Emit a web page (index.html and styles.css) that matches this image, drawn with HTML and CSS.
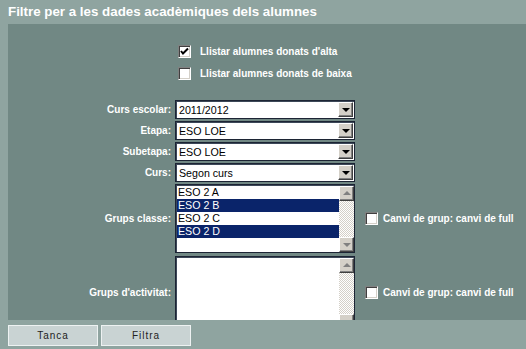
FILE: index.html
```html
<!DOCTYPE html>
<html lang="ca">
<head>
  <meta charset="UTF-8" />
  <title>Filtre per a les dades acadèmiques dels alumnes</title>
  <link rel="stylesheet" href="styles.css">
</head>
<body>
  <h1 class="title">Filtre per a les dades acadèmiques dels alumnes</h1>

  <div class="panel">
    <div class="checks">
      <label class="check-row">
        <span class="check">
          <svg width="9" height="9" viewBox="0 0 9 9"><path d="M1 4 L3 6.5 L8 1.5" fill="none" stroke="#000" stroke-width="2"/></svg>
        </span>
        Llistar alumnes donats d'alta
      </label>
      <label class="check-row">
        <span class="check"></span>
        Llistar alumnes donats de baixa
      </label>
    </div>

    <div class="filter-grid">
      <span class="label">Curs escolar:</span>
      <div class="combo"><span>2011/2012</span><i class="combo-btn"></i></div>
      <span></span>

      <span class="label">Etapa:</span>
      <div class="combo"><span>ESO LOE</span><i class="combo-btn"></i></div>
      <span></span>

      <span class="label">Subetapa:</span>
      <div class="combo"><span>ESO LOE</span><i class="combo-btn"></i></div>
      <span></span>

      <span class="label">Curs:</span>
      <div class="combo"><span>Segon curs</span><i class="combo-btn"></i></div>
      <span></span>

      <span class="label">Grups classe:</span>
      <div class="listbox">
        <ul class="options">
          <li>ESO 2 A</li>
          <li class="selected">ESO 2 B</li>
          <li>ESO 2 C</li>
          <li class="selected">ESO 2 D</li>
        </ul>
        <div class="scrollbar">
          <i class="arrow up"></i>
          <i class="track"></i>
          <i class="arrow down"></i>
        </div>
      </div>
      <label class="check-row side">
        <span class="check"></span>
        Canvi de grup: canvi de full
      </label>

      <span class="label">Grups d'activitat:</span>
      <div class="listbox tall">
        <ul class="options"></ul>
        <div class="scrollbar">
          <i class="arrow up"></i>
          <i class="track"></i>
          <i class="arrow down"></i>
        </div>
      </div>
      <label class="check-row side">
        <span class="check"></span>
        Canvi de grup: canvi de full
      </label>
    </div>
  </div>

  <div class="actions">
    <button class="btn">Tanca</button>
    <button class="btn">Filtra</button>
  </div>
</body>
</html>
```

FILE: styles.css
```css
body {
  margin: 0;
  background: #8fa4a0;
  font-family: 'Liberation Sans', Arial, sans-serif;
  color: #fff;
  height: 349px;
  overflow: hidden;
}
.title {
  margin: 0;
  padding: 0 8px;
  height: 24px;
  line-height: 24px;
  font-size: 13.33px;
  font-weight: bold;
  color: #fff;
}
.panel {
  margin-left: 8px;
  height: 296px;
  background: #718884;
  overflow: hidden;
}
.checks {
  padding: 21px 0 0 170px;
  display: flex;
  flex-direction: column;
  gap: 9px;
  height: 55px;
}
.check-row {
  display: flex;
  align-items: center;
  gap: 9px;
  font-size: 10px;
  font-weight: bold;
  color: #fff;
  height: 13px;
}
.check {
  width: 13px;
  height: 13px;
  box-sizing: border-box;
  background: #fff;
  border-top: 1px solid #808080;
  border-left: 1px solid #808080;
  border-right: 1px solid #fff;
  border-bottom: 1px solid #fff;
  box-shadow: inset 1px 1px 0 #404040, inset -1px -1px 0 #d4d0c8;
  display: flex;
  align-items: center;
  justify-content: center;
}
.filter-grid {
  display: grid;
  grid-template-columns: 163px 180px 1fr;
  column-gap: 4px;
  row-gap: 2px;
  align-items: center;
}
.label {
  text-align: right;
  font-size: 10px;
  font-weight: bold;
  color: #fff;
}
.combo {
  height: 19px;
  box-sizing: border-box;
  background: #fff;
  border: 1px solid #1c2434;
  box-shadow: inset 1px 1px 0 #3c4858;
  display: flex;
  align-items: center;
  padding: 0 1px 0 3px;
  color: #000;
  font-size: 10.67px;
}
.combo span {
  flex: 1;
}
.combo-btn {
  width: 15px;
  height: 15px;
  box-sizing: border-box;
  background: #d4d0c8;
  border: 1px solid;
  border-color: #fff #404040 #404040 #fff;
  box-shadow: inset -1px -1px 0 #808080;
  position: relative;
}
.combo-btn::after {
  content: '';
  position: absolute;
  left: 3px;
  top: 5px;
  border-left: 4px solid transparent;
  border-right: 4px solid transparent;
  border-top: 4px solid #000;
}
.listbox {
  height: 69px;
  box-sizing: border-box;
  background: #fff;
  border: 1px solid #1c2434;
  box-shadow: inset 1px 1px 0 #3c4858;
  display: flex;
  padding: 1px 0 0 1px;
}
.listbox.tall {
  height: 74px;
  margin-top: 1px;
}
.options {
  list-style: none;
  margin: 0;
  padding: 0;
  flex: 1;
  color: #000;
  font-size: 10.67px;
}
.options li {
  height: 13px;
  line-height: 13px;
  padding-left: 1px;
}
.options li.selected {
  background: #0a246a;
  color: #fff;
}
.scrollbar {
  width: 15px;
  display: flex;
  flex-direction: column;
}
.scrollbar .track {
  flex: 1;
  background: repeating-conic-gradient(#fff 0 25%, #d4d0c8 0 50%) 0 0 / 2px 2px;
}
.arrow {
  height: 15px;
  box-sizing: border-box;
  background: #d4d0c8;
  border: 1px solid;
  border-color: #fff #404040 #404040 #fff;
  box-shadow: inset -1px -1px 0 #808080;
  position: relative;
}
.arrow::after {
  content: '';
  position: absolute;
  left: 3px;
  border-left: 4px solid transparent;
  border-right: 4px solid transparent;
}
.arrow.up::after {
  top: 4px;
  border-bottom: 4px solid #808080;
}
.arrow.down::after {
  top: 5px;
  border-top: 4px solid #808080;
}
.check-row.side {
  margin-left: 6px;
  gap: 5px;
}
.actions {
  display: flex;
  gap: 3px;
  padding: 5px 0 0 8px;
}
.btn {
  width: 90px;
  height: 21px;
  background: #c9d3d3;
  border: 1px solid #eef2f2;
  font-family: 'Liberation Sans', Arial, sans-serif;
  font-size: 10px;
  letter-spacing: 1px;
  color: #222;
  padding: 0;
}
```
